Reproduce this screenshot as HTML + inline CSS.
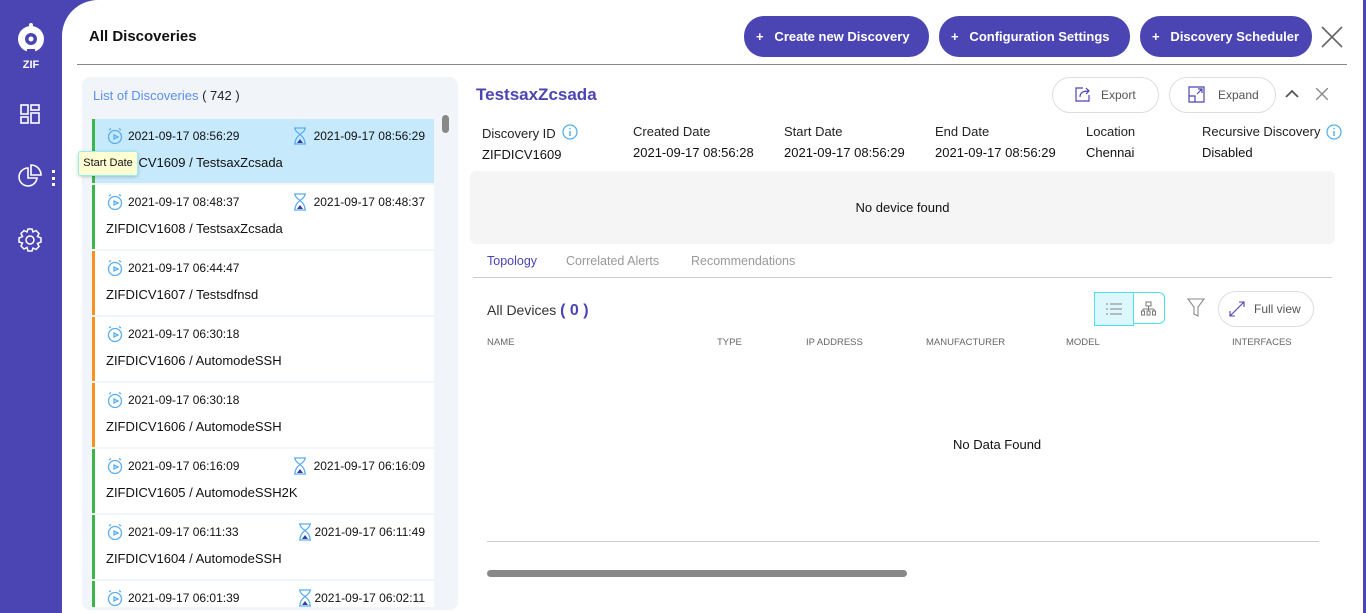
<!DOCTYPE html>
<html><head><meta charset="utf-8"><style>
*{box-sizing:border-box;margin:0;padding:0}
html,body{width:1366px;height:613px;overflow:hidden}
body{background:#4b45b3;font-family:"Liberation Sans",sans-serif;font-size:13px;color:#111;position:relative}
.a{position:absolute;white-space:nowrap}
.main{position:absolute;left:62px;top:0;width:1301px;height:613px;background:#fff;border-top-left-radius:36px}
.btn{position:absolute;top:16px;height:41px;background:#4b45b3;color:#fff;border-radius:20px;font-weight:bold;font-size:13px;line-height:41px;padding-left:12px}
.list{position:absolute;left:82px;top:77px;width:376px;height:533px;background:#f1f4f8;border-radius:8px;overflow:hidden}
.clip{position:absolute;left:10px;top:42px;width:342px;height:488px;overflow:hidden}
.card{position:absolute;left:0;width:342px;height:64px;background:#fff;border-left:3px solid #3cb54a}
.card.o{border-left-color:#f7931e}
.card.sel{background:#c7e9fc}
.card .d1{position:absolute;left:33px;top:10px;font-size:12px}
.card .d2{position:absolute;right:9px;top:10px;font-size:12px}
.card .n{position:absolute;left:11px;top:36px;font-size:13px}
.clk{position:absolute;left:11px;top:8px}
.hg{position:absolute;top:8px}
.lab{position:absolute;font-size:13px;color:#222}
.th{position:absolute;top:337px;font-size:9.5px;color:#666}
.pill{position:absolute;border:1px solid #ddd;border-radius:18px;height:36px;font-size:12px;color:#555;line-height:34px}
</style></head><body>
<svg class="a" style="left:15px;top:22px" width="32" height="50" viewBox="0 0 32 50"><circle cx="16" cy="17" r="13" fill="#fff"/><circle cx="16" cy="17" r="6" fill="#4b45b3"/><circle cx="16" cy="17" r="2.5" fill="#fff"/><rect x="12" y="27" width="8" height="5" fill="#4b45b3"/><circle cx="16" cy="3" r="2" fill="#fff"/><text x="16" y="46" font-family="Liberation Sans" font-weight="bold" font-size="11" fill="#fff" text-anchor="middle">ZIF</text></svg>
<svg class="a" style="left:20px;top:104px" width="20" height="20" viewBox="0 0 20 20" fill="none" stroke="#fff" stroke-width="1.6"><rect x="1" y="1" width="7" height="9"/><rect x="11" y="1" width="8" height="5"/><rect x="1" y="13" width="7" height="6"/><rect x="11" y="9" width="8" height="10"/></svg>
<svg class="a" style="left:17px;top:164px" width="26" height="26" viewBox="0 0 26 26" fill="none" stroke="#fff" stroke-width="1.6"><path d="M11 4A9 9 0 1 0 20 14H11Z"/><path d="M14 1A10 10 0 0 1 24 11H14Z"/></svg>
<div class="a" style="left:52px;top:170px;width:3px;height:16px;border-left:3px dotted #fff"></div>
<svg class="a" style="left:18px;top:228px" width="24" height="24" viewBox="0 0 24 24" fill="none" stroke="#fff" stroke-width="1.5"><circle cx="12" cy="12" r="4"/><path d="M10 1h4l1 3 3-1.5 3 3L19.5 8.5 23 10v4l-3.5 1.5 1.5 3-3 3-3-1.5L14 23h-4l-1-3.5-3 1.5-3-3 1.5-3L1 14v-4l3.5-1.5L3 5.5l3-3L9 4z"/></svg>
<div class="main"></div>
<div class="a" style="left:89px;top:28px;font-size:15px;font-weight:bold;color:#111">All Discoveries</div>
<div class="a" style="left:77px;top:64px;width:1270px;height:1px;background:#888"></div>
<div class="btn" style="left:744px;width:185px">+&nbsp;&nbsp; Create new Discovery</div>
<div class="btn" style="left:939px;width:191px">+&nbsp;&nbsp; Configuration Settings</div>
<div class="btn" style="left:1140px;width:172px">+&nbsp;&nbsp; Discovery Scheduler</div>
<svg class="a" style="left:1321px;top:26px" width="22" height="22" viewBox="0 0 22 22" stroke="#666" stroke-width="1.6"><path d="M1 1L21 21M21 1L1 21"/></svg>
<div class="list">
<div class="a" style="left:11px;top:11px;font-size:13px;color:#5a8ff0">List of Discoveries <span style="color:#222">( 742 )</span></div>
<div class="a" style="left:360px;top:38px;width:7px;height:18px;background:#888;border-radius:4px"></div>
<div class="clip" id="cards"></div>
</div>
<script>
var d=[["08:56:29","08:56:29","ZIFDICV1609 / TestsaxZcsada","sel"],["08:48:37","08:48:37","ZIFDICV1608 / TestsaxZcsada",""],["06:44:47","","ZIFDICV1607 / Testsdfnsd","o"],["06:30:18","","ZIFDICV1606 / AutomodeSSH","o"],["06:30:18","","ZIFDICV1606 / AutomodeSSH","o"],["06:16:09","06:16:09","ZIFDICV1605 / AutomodeSSH2K",""],["06:11:33","06:11:49","ZIFDICV1604 / AutomodeSSH",""],["06:01:39","06:02:11","",""]];
var h='';
d.forEach(function(r,i){
 var clk='<svg class="clk" width="18" height="18" viewBox="0 0 18 18" fill="none" stroke="#5aaef0" stroke-width="1.3"><circle cx="9" cy="10" r="6.5"/><path d="M3 3l2-1.5M15 3l-2-1.5M8 8l4 2-4 2z"/></svg>';
 var hg=r[1]?'<svg class="hg" style="left:'+(i>=6?203:198)+'px" width="14" height="18" viewBox="0 0 14 18"><path d="M1 1h12M1 17h12M2 1c0 6 10 6 10 16M12 1c0 6-10 6-10 16" fill="none" stroke="#5aaef0" stroke-width="1.3"/><path d="M4 16l3-4 3 4z" fill="#3a3aa0"/></svg><span class="d2">2021-09-17 '+r[1]+'</span>':'';
 h+='<div class="card '+(r[3]||'')+'" style="top:'+(i*66)+'px">'+clk+'<span class="d1">2021-09-17 '+r[0]+'</span>'+hg+'<span class="n">'+r[2]+'</span></div>';
});
document.getElementById('cards').innerHTML=h;
</script>
<div class="a" style="left:78px;top:151px;width:60px;height:25px;background:#ffffd4;border:1px solid #9ee;border-radius:3px;font-size:11px;line-height:23px;text-align:center;box-shadow:0 1px 3px rgba(0,0,0,.2)">Start Date</div>
<div class="a" style="left:476px;top:85px;font-size:17px;font-weight:bold;color:#4b45b3">TestsaxZcsada</div>
<div class="pill" style="left:1052px;top:77px;width:107px;padding-left:48px">Export</div>
<svg class="a" style="left:1075px;top:86px" width="17" height="16" viewBox="0 0 17 16" fill="none" stroke="#4b45b3" stroke-width="1.2"><path d="M8 2H1v13h13V9"/><path d="M5 11c0-5 4-6 9-6M11 2l3 3-3 3"/></svg>
<div class="pill" style="left:1169px;top:77px;width:107px;padding-left:48px">Expand</div>
<svg class="a" style="left:1188px;top:86px" width="17" height="17" viewBox="0 0 17 17" fill="none" stroke="#4b45b3" stroke-width="1.2"><path d="M1 1h15v15H1z"/><path d="M1 10h6v6M9 8l5-5M10 3h4v4"/></svg>
<svg class="a" style="left:1285px;top:89px" width="14" height="9" viewBox="0 0 14 9" fill="none" stroke="#555" stroke-width="1.8"><path d="M1 8l6-6 6 6"/></svg>
<svg class="a" style="left:1316px;top:88px" width="12" height="12" viewBox="0 0 12 12" stroke="#888" stroke-width="1.4"><path d="M0 0L12 12M12 0L0 12"/></svg>
<div class="lab" style="left:482px;top:126px">Discovery ID</div>
<svg class="a" style="left:562px;top:124px" width="16" height="16" viewBox="0 0 16 16"><circle cx="8" cy="8" r="7" fill="none" stroke="#5aaef0" stroke-width="1.3"/><path d="M8 7v5M8 4v1.3" stroke="#5aaef0" stroke-width="1.5"/></svg>
<div class="lab" style="left:482px;top:147px;color:#111">ZIFDICV1609</div>
<div class="lab" style="left:633px;top:124px">Created Date</div><div class="lab" style="left:633px;top:145px;color:#111">2021-09-17 08:56:28</div>
<div class="lab" style="left:784px;top:124px">Start Date</div><div class="lab" style="left:784px;top:145px;color:#111">2021-09-17 08:56:29</div>
<div class="lab" style="left:935px;top:124px">End Date</div><div class="lab" style="left:935px;top:145px;color:#111">2021-09-17 08:56:29</div>
<div class="lab" style="left:1086px;top:124px">Location</div><div class="lab" style="left:1086px;top:145px;color:#111">Chennai</div>
<div class="lab" style="left:1202px;top:124px">Recursive Discovery</div><div class="lab" style="left:1202px;top:145px;color:#111">Disabled</div>
<svg class="a" style="left:1326px;top:124px" width="16" height="16" viewBox="0 0 16 16"><circle cx="8" cy="8" r="7" fill="none" stroke="#5aaef0" stroke-width="1.3"/><path d="M8 7v5M8 4v1.3" stroke="#5aaef0" stroke-width="1.5"/></svg>
<div class="a" style="left:470px;top:171px;width:865px;height:73px;background:#f5f5f5;border-radius:6px;text-align:center;line-height:73px;font-size:13px">No device found</div>
<div class="a" style="left:487px;top:254px;font-size:12.5px;color:#4b45b3">Topology</div>
<div class="a" style="left:566px;top:254px;font-size:12.5px;color:#999">Correlated Alerts</div>
<div class="a" style="left:691px;top:254px;font-size:12.5px;color:#999">Recommendations</div>
<div class="a" style="left:473px;top:277px;width:859px;height:1px;background:#ccc"></div>
<div class="a" style="left:487px;top:302px;font-size:14px;color:#333">All Devices <span style="color:#4b45b3;font-weight:bold;font-size:16px">( 0 )</span></div>
<div class="a" style="left:1094px;top:292px;width:71px;height:32px;border:1.5px solid #4ce0f0;border-radius:0 6px 6px 0"></div>
<div class="a" style="left:1094px;top:292px;width:40px;height:34px;border:1.5px solid #4ce0f0;background:#dcf8fc"></div>
<svg class="a" style="left:1106px;top:303px" width="16" height="12" viewBox="0 0 16 12" stroke="#999" stroke-width="1.2"><path d="M0 1h2M4 1h12M0 6h2M4 6h12M0 11h2M4 11h12"/></svg>
<svg class="a" style="left:1141px;top:301px" width="15" height="15" viewBox="0 0 15 15" fill="none" stroke="#777" stroke-width="1"><rect x="5" y="1" width="5" height="4"/><path d="M7.5 5v3M2 8h11M2 8v2M7.5 8v2M13 8v2"/><rect x="0.5" y="10" width="3" height="4"/><rect x="6" y="10" width="3" height="4"/><rect x="11.5" y="10" width="3" height="4"/></svg>
<svg class="a" style="left:1187px;top:298px" width="18" height="19" viewBox="0 0 18 19" fill="none" stroke="#888" stroke-width="1.1"><path d="M1 1h16l-6 8v9l-4-2V9z"/></svg>
<div class="pill" style="left:1218px;top:291px;width:96px;padding-left:35px">Full view</div>
<svg class="a" style="left:1229px;top:301px" width="16" height="16" viewBox="0 0 16 16" fill="none" stroke="#4b45b3" stroke-width="1.1"><path d="M1 15L15 1M10 1h5v5M1 10v5h5"/></svg>
<div class="th" style="left:487px">NAME</div><div class="th" style="left:717px">TYPE</div><div class="th" style="left:806px">IP ADDRESS</div><div class="th" style="left:926px">MANUFACTURER</div><div class="th" style="left:1066px">MODEL</div><div class="th" style="left:1232px">INTERFACES</div>
<div class="a" style="left:953px;top:437px;font-size:13px">No Data Found</div>
<div class="a" style="left:487px;top:541px;width:832px;height:1px;background:#ccc"></div>
<div class="a" style="left:487px;top:570px;width:420px;height:7px;background:#888;border-radius:4px"></div>
</body></html>
